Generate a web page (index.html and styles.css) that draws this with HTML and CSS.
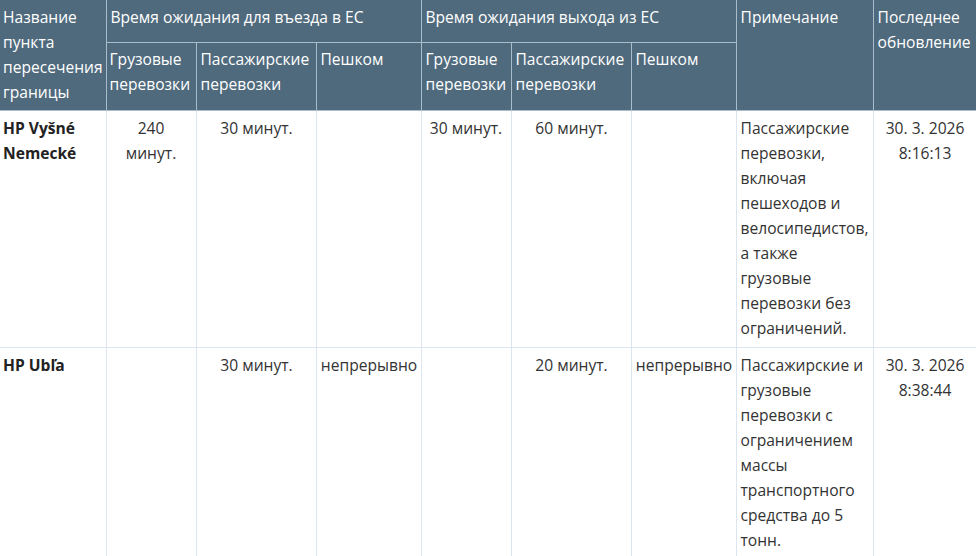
FILE: index.html
```html
<!DOCTYPE html>
<html lang="ru">
<head>
<meta charset="utf-8">
<link rel="stylesheet" href="styles.css">
</head>
<body>
<table class="wait">
<colgroup>
<col class="c1"><col class="c2"><col class="c3"><col class="c4"><col class="c5"><col class="c6"><col class="c7"><col class="c8"><col class="c9">
</colgroup>
<thead>
<tr class="r1">
<th rowspan="2">Название пункта пересечения границы</th>
<th colspan="3">Время ожидания для въезда в ЕС</th>
<th colspan="3">Время ожидания выхода из ЕС</th>
<th rowspan="2">Примечание</th>
<th rowspan="2">Последнее обновление</th>
</tr>
<tr class="r2">
<th>Грузовые перевозки</th>
<th>Пассажирские перевозки</th>
<th>Пешком</th>
<th>Грузовые перевозки</th>
<th>Пассажирские перевозки</th>
<th>Пешком</th>
</tr>
</thead>
<tbody>
<tr>
<td class="name">HP Vyšné Nemecké</td>
<td class="num freight">240 минут.</td>
<td class="num">30 минут.</td>
<td class="num"></td>
<td class="num freight">30 минут.</td>
<td class="num">60 минут.</td>
<td class="num"></td>
<td class="note">Пассажирские перевозки, включая пешеходов и велосипедистов, а также грузовые перевозки без ограничений.</td>
<td class="num">30. 3. 2026 8:16:13</td>
</tr>
<tr>
<td class="name">HP Ubľa</td>
<td class="num freight"></td>
<td class="num">30 минут.</td>
<td class="num">непрерывно</td>
<td class="num freight"></td>
<td class="num">20 минут.</td>
<td class="num">непрерывно</td>
<td class="note">Пассажирские и грузовые перевозки с ограничением массы транспортного средства до 5 тонн.</td>
<td class="num">30. 3. 2026 8:38:44</td>
</tr>
</tbody>
</table>
</body>
</html>
```

FILE: styles.css
```css
html, body {
  margin: 0;
  padding: 0;
  background: #ffffff;
}
body {
  font-family: "Open Sans", "Liberation Sans", sans-serif;
  font-size: 15.6px;
  line-height: 25px;
  color: #333333;
}
.wait {
  width: 976px;
  table-layout: fixed;
  border-collapse: collapse;
}
.c1 { width: 106px; }
.c2 { width: 90px; }
.c3 { width: 120px; }
.c4 { width: 105px; }
.c5 { width: 90px; }
.c6 { width: 120px; }
.c7 { width: 105px; }
.c8 { width: 137px; }
.c9 { width: 103px; }
.wait th {
  background: #4f6a7d;
  color: #ffffff;
  font-weight: normal;
  text-align: left;
  vertical-align: top;
  padding: 5px 3px 5px 4px;
  border: 1px solid #a9bccb;
  border-top: none;
}
.wait th:first-child { border-left: none; padding-left: 3px; }
.wait .r1 { height: 42px; }
.wait .r2 th { padding-top: 4px; }
.wait td {
  vertical-align: top;
  padding: 5px 3px 6px 4px;
  border: 1px solid #dde6ee;
}
.wait td:first-child { border-left: none; padding-left: 3px; }
.wait td.name { font-weight: bold; color: #222222; }
.wait td.num { text-align: center; }
.wait td.freight { padding-left: 6px; padding-right: 6px; }
.wait td.note { text-align: left; }
```
